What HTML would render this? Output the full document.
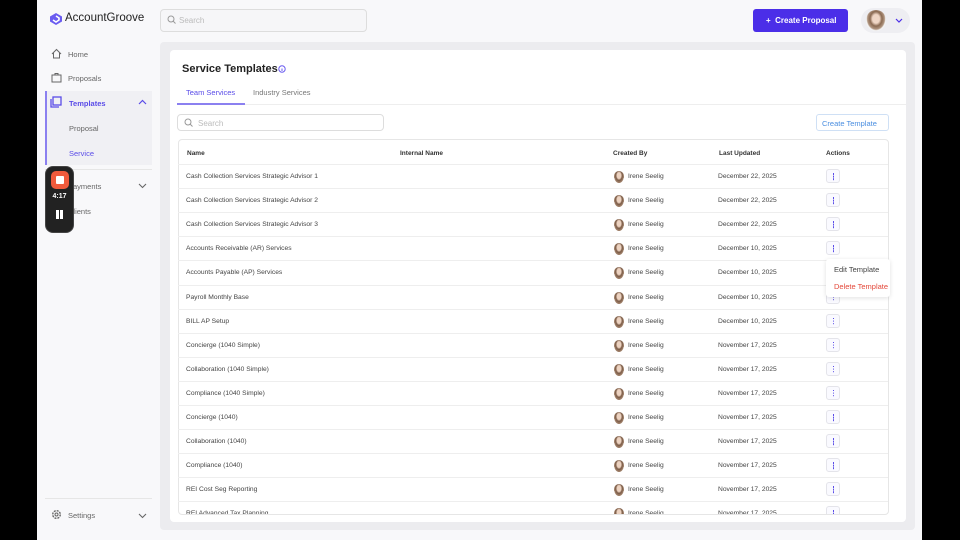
<!DOCTYPE html>
<html><head><meta charset="utf-8"><style>
*{box-sizing:border-box;margin:0;padding:0}
body{width:960px;height:540px;background:#000;font-family:"Liberation Sans",sans-serif;position:relative;overflow:hidden;color:#333}
#app{position:absolute;left:37px;top:0;width:885px;height:540px;background:#f8f8fa}
.a{position:absolute}
.nav{font-size:7.5px;color:#666}
.panel{left:123px;top:42px;width:755px;height:488px;background:#ececef;border-radius:4px}
.card{left:133px;top:50px;width:736px;height:472px;background:#fff;border-radius:4px}
.row{position:absolute;left:141px;width:710px;height:24px;border-top:1px solid #eee;font-size:6.7px;color:#444}
.row span{position:absolute;top:8px}
.av{position:absolute;width:10px;height:12px;border-radius:5px 5px 3px 3px;background:radial-gradient(ellipse at 50% 38%,#ecd2c0 28%,#7a5a45 45%,#a88a74 70%,#fff 72%);top:6px}
.dot{position:absolute;left:648px;top:4px;width:14px;height:14px;border:1px solid #e4e4ea;border-radius:3px;background:#fafaff}
.dot:after{content:"";position:absolute;left:5.5px;top:3px;width:1.6px;height:1.6px;background:#5a4ce8;box-shadow:0 2.6px 0 #5a4ce8,0 5.2px 0 #5a4ce8}
</style></head><body>
<div id="app">
<svg class="a" style="left:12px;top:12px" width="14" height="14" viewBox="0 0 14 14"><path d="M7 1 L13 4.5 V9.5 L7 13 L1 9.5 V4.5 Z" fill="#6a5cf0"/><path d="M7 4 L10 6 V8 L7 10 L4 8" fill="none" stroke="#fff" stroke-width="1.6"/></svg>
<div class="a" style="left:28px;top:12px;font-size:11.5px;color:#222">AccountGroove</div>
<div class="a" style="left:123px;top:9px;width:207px;height:23px;border:1px solid #ddd;border-radius:4px;background:#f6f6f8;font-size:8px;color:#bbb;padding:6px 0 0 18px">Search</div>
<svg class="a" style="left:130px;top:15px" width="9" height="9"><circle cx="4" cy="4" r="3" fill="none" stroke="#999"/><path d="M6 6l2.5 2.5" stroke="#999"/></svg>
<svg class="a" style="left:14px;top:48px" width="11" height="11"><path d="M1 6 L5.5 1.5 L10 6 M2.5 5 V10 H8.5 V5" fill="none" stroke="#666"/></svg>
<div class="a nav" style="left:31px;top:50px">Home</div>
<svg class="a" style="left:14px;top:72px" width="11" height="11"><rect x="1" y="3" width="9" height="7" fill="none" stroke="#666"/><path d="M4 3V1.5H7V3" fill="none" stroke="#666"/></svg>
<div class="a nav" style="left:31px;top:74px">Proposals</div>
<div class="a" style="left:8px;top:91px;width:107px;height:74px;background:#f0f0f4;border-left:2px solid #8b80f0"></div>
<svg class="a" style="left:13px;top:96px" width="12" height="12"><rect x="3" y="1" width="8" height="8" fill="none" stroke="#5a4ce8" stroke-width="1.3"/><path d="M1 3V11H9" fill="none" stroke="#5a4ce8" stroke-width="1.3"/></svg>
<div class="a nav" style="left:32px;top:99px;color:#5a4ce8;font-weight:bold">Templates</div>
<svg class="a" style="left:101px;top:99px" width="9" height="6"><path d="M1 5L4.5 1.5L8 5" fill="none" stroke="#5a4ce8" stroke-width="1.2"/></svg>
<div class="a nav" style="left:32px;top:124px">Proposal</div>
<div class="a nav" style="left:32px;top:149px;color:#5a4ce8">Service</div>
<div class="a" style="left:8px;top:169px;width:107px;height:1px;background:#e6e6e6"></div>
<div class="a nav" style="left:31px;top:182px">Payments</div>
<svg class="a" style="left:101px;top:183px" width="9" height="6"><path d="M1 1L4.5 4.5L8 1" fill="none" stroke="#666" stroke-width="1.1"/></svg>
<div class="a nav" style="left:31px;top:207px">Clients</div>
<div class="a" style="left:8px;top:498px;width:107px;height:1px;background:#e6e6e6"></div>
<svg class="a" style="left:14px;top:509px" width="11" height="11"><circle cx="5.5" cy="5.5" r="3.8" fill="none" stroke="#666" stroke-width="1.4" stroke-dasharray="2 1"/><circle cx="5.5" cy="5.5" r="1.5" fill="none" stroke="#666"/></svg>
<div class="a nav" style="left:31px;top:511px">Settings</div>
<svg class="a" style="left:101px;top:513px" width="9" height="6"><path d="M1 1L4.5 4.5L8 1" fill="none" stroke="#666" stroke-width="1.1"/></svg>
<div class="a" style="left:8px;top:166px;width:29px;height:67px;background:#222;border-radius:8px;border:1px solid #444"></div>
<div class="a" style="left:14px;top:171px;width:18px;height:18px;background:#f05a3c;border-radius:5px"></div>
<div class="a" style="left:19px;top:176px;width:8px;height:8px;background:#fff;border-radius:1px"></div>
<div class="a" style="left:8px;top:193px;width:29px;text-align:center;color:#fff;font-size:7px;font-weight:bold">4:17</div>
<div class="a" style="left:19px;top:210px;width:2.5px;height:9px;background:#fff;box-shadow:4px 0 0 #fff"></div>
<div class="a" style="left:716px;top:9px;width:95px;height:23px;background:#4b2ee8;border-radius:3px;color:#fff;font-size:8px;font-weight:bold;padding:7px 0 0 13px">+&nbsp;&nbsp;Create Proposal</div>
<div class="a" style="left:824px;top:8px;width:49px;height:25px;background:#eeeef2;border-radius:13px"></div>
<div class="a" style="left:829px;top:10px;width:20px;height:21px;border-radius:10px;background:radial-gradient(ellipse at 50% 42%,#efd6c5 25%,#8a6a52 42%,#b09580 60%,#f4f4f4 68%)"></div>
<svg class="a" style="left:858px;top:18px" width="8" height="5"><path d="M1 1L4 4L7 1" fill="none" stroke="#4b2ee8" stroke-width="1.2"/></svg>
<div class="a panel"></div>
<div class="a card"></div>
<div class="a" style="left:145px;top:63px;font-size:11px;font-weight:bold;color:#222">Service Templates</div>
<svg class="a" style="left:241px;top:65px" width="8" height="8"><circle cx="4" cy="4" r="3.2" fill="none" stroke="#6a5cf0"/><path d="M4 3.5V6" stroke="#6a5cf0"/></svg>
<div class="a" style="left:149px;top:88px;font-size:7.5px;color:#5a4ce8">Team Services</div>
<div class="a" style="left:216px;top:88px;font-size:7.5px;color:#777">Industry Services</div>
<div class="a" style="left:140px;top:104px;width:729px;height:1px;background:#eee"></div>
<div class="a" style="left:140px;top:103px;width:68px;height:2px;background:#8b80f0"></div>
<div class="a" style="left:140px;top:114px;width:207px;height:17px;border:1px solid #ddd;border-radius:4px;font-size:8px;color:#bbb;padding:4px 0 0 20px">Search</div>
<svg class="a" style="left:147px;top:118px" width="9" height="9"><circle cx="4" cy="4" r="3" fill="none" stroke="#999"/><path d="M6 6l2.5 2.5" stroke="#999"/></svg>
<div class="a" style="left:779px;top:114px;width:73px;height:17px;border:1px solid #cfe0f5;border-radius:3px;font-size:7.5px;color:#4a8ee0;padding:4px 0 0 5px">Create Template</div>
<div class="a" style="left:141px;top:139px;width:711px;height:376px;border:1px solid #e6e6e6;border-radius:4px;overflow:hidden">
<div style="position:absolute;left:8px;top:10px;font-size:6.5px;font-weight:bold;color:#333">Name</div>
<div style="position:absolute;left:221px;top:10px;font-size:6.5px;font-weight:bold;color:#333">Internal Name</div>
<div style="position:absolute;left:434px;top:10px;font-size:6.5px;font-weight:bold;color:#333">Created By</div>
<div style="position:absolute;left:540px;top:10px;font-size:6.5px;font-weight:bold;color:#333">Last Updated</div>
<div style="position:absolute;left:647px;top:10px;font-size:6.5px;font-weight:bold;color:#333">Actions</div>
</div>
<div id="rows"></div>
<div class="a" style="left:789px;top:259px;width:64px;height:38px;background:#fff;border-radius:3px;box-shadow:0 1px 5px rgba(0,0,0,.12);font-size:7.5px">
<div style="position:absolute;left:8px;top:6px;color:#444">Edit Template</div>
<div style="position:absolute;left:8px;top:23px;color:#e4483a">Delete Template</div></div>
</div>
<script>
var d=[["Cash Collection Services Strategic Advisor 1","December 22, 2025"],["Cash Collection Services Strategic Advisor 2","December 22, 2025"],["Cash Collection Services Strategic Advisor 3","December 22, 2025"],["Accounts Receivable (AR) Services","December 10, 2025"],["Accounts Payable (AP) Services","December 10, 2025"],["Payroll Monthly Base","December 10, 2025"],["BILL AP Setup","December 10, 2025"],["Concierge (1040 Simple)","November 17, 2025"],["Collaboration (1040 Simple)","November 17, 2025"],["Compliance (1040 Simple)","November 17, 2025"],["Concierge (1040)","November 17, 2025"],["Collaboration (1040)","November 17, 2025"],["Compliance (1040)","November 17, 2025"],["REI Cost Seg Reporting","November 17, 2025"],["REI Advanced Tax Planning","November 17, 2025"]];
var h="";d.forEach(function(r,i){var t=164+i*24.1;if(t>512)return;var hh=Math.min(24,514-t);h+='<div class="row" style="top:'+t+'px;height:'+hh+'px;overflow:hidden"><span style="left:8px">'+r[0]+'</span><div class="av" style="left:436px"></div><span style="left:450px">Irene Seelig</span><span style="left:540px">'+r[1]+'</span><div class="dot"></div></div>';});
document.getElementById("rows").innerHTML=h;
</script>
</body></html>
